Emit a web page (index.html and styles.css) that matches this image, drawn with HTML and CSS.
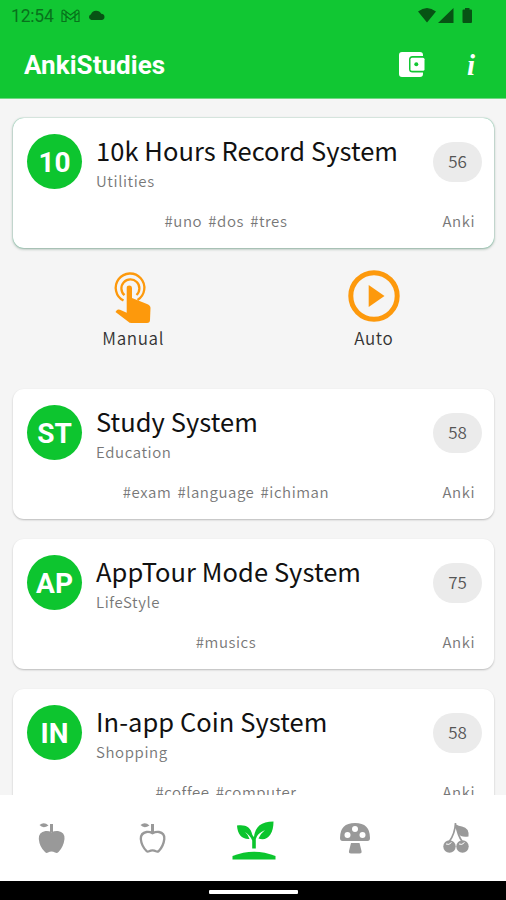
FILE: index.html
```html
<!DOCTYPE html>
<html lang="en">
<head>
<meta charset="utf-8">
<title>AnkiStudies</title>
<link rel="stylesheet" href="styles.css">
</head>
<body>
<div class="app">
  <header class="top">
    <div class="status">
      <span class="clock">12:54</span>
      <svg class="mail" width="19" height="14" viewBox="0 0 19 14" fill="none" stroke="currentColor" stroke-width="1.200"><path d="M1 12.5V3Q1 1 3 1L9.5 6 16 1Q18 1 18 3V12.5H14V7L9.5 10.5 5 7V12.5ZM1.500 4L9.500 10.500 17.500 4M5 3V7M14 3V7"/></svg>
      <svg class="cloud" width="17" height="10" viewBox="0 0 17 10"><path fill="currentColor" d="M3.500 10A3 3 0 0 1 3 4.200 5.500 5 0 0 1 13.200 3.700 3.300 3.200 0 0 1 14 10Z"/></svg>
      <div class="signals">
        <svg width="55" height="17" viewBox="0 0 55 17" fill="currentColor"><path d="M0 4.500Q9 -2.500 18 4.500L9 15.500ZM20 16L35.500 1V16ZM44.500 3.500Q44.500 2.500 45.500 2.500H47V1H51.500V2.500H53Q54 2.500 54 3.500V15Q54 16 53 16H45.500Q44.500 16 44.500 15Z"/></svg>
      </div>
    </div>
    <div class="bar">
      <h1>AnkiStudies</h1>
      <svg class="wallet" width="26" height="25" viewBox="0 0 26 25"><path fill="#fff" d="M3 0H21Q24 0 24 3V4H13.500Q10 4 10 7.500V17Q10 20.500 13.500 20.500H24V22Q24 25 21 25H3Q0 25 0 22V3Q0 0 3 0Z"/><rect x="11.500" y="5.700" width="14" height="13" rx="1.500" fill="#fff"/><circle cx="17.300" cy="12.300" r="2" fill="#11c733"/></svg>
      <span class="info">i</span>
    </div>
  </header>

  <main class="list">
    <article class="card selected">
      <div class="head"><div class="avatar">10</div><div class="names"><h2>10k Hours Record System</h2><p>Utilities</p></div><span class="count">56</span></div>
      <div class="foot"><span class="tags">#uno&nbsp; #dos&nbsp; #tres</span><span class="owner">Anki</span></div>
    </article>
    <div class="modes">
      <div class="mode">
        <svg class="touch" width="52" height="52" viewBox="0 0 52 52"><g fill="none" stroke="#fd990c" stroke-width="2.300"><path d="M11.500 29.500A14.300 14.300 0 1 1 25.500 29"/><path d="M12.500 24.200A9 9 0 1 1 24.500 24"/></g><path fill="#fd990c" d="M14.700 17Q14.700 14.600 17.300 14.600T20 17V27L35 33Q38.500 34.500 38.500 37L38 49Q38 52 35 52H19.500Q17.500 52 16 50.500L3.500 41 5 39Q6 38 8 38.700L14.700 41.800Z"/></svg>
        <span>Manual</span>
      </div>
      <div class="mode">
        <svg width="52" height="52" viewBox="0 0 52 52"><circle cx="26" cy="26" r="23.200" fill="none" stroke="#fd990c" stroke-width="5"/><path fill="#fd990c" d="M20.700 15L36.500 26 20.700 37Z"/></svg>
        <span>Auto</span>
      </div>
    </div>
    <article class="card">
      <div class="head"><div class="avatar">ST</div><div class="names"><h2>Study System</h2><p>Education</p></div><span class="count">58</span></div>
      <div class="foot"><span class="tags">#exam&nbsp; #language&nbsp; #ichiman</span><span class="owner">Anki</span></div>
    </article>
    <article class="card">
      <div class="head"><div class="avatar">AP</div><div class="names"><h2>AppTour Mode System</h2><p>LifeStyle</p></div><span class="count">75</span></div>
      <div class="foot"><span class="tags">#musics</span><span class="owner">Anki</span></div>
    </article>
    <article class="card">
      <div class="head"><div class="avatar">IN</div><div class="names"><h2>In-app Coin System</h2><p>Shopping</p></div><span class="count">58</span></div>
      <div class="foot"><span class="tags">#coffee&nbsp; #computer</span><span class="owner">Anki</span></div>
    </article>
  </main>

  <nav class="tabs">
    <div class="tab"><svg width="28" height="32" viewBox="0 0 28 32"><g fill="#999"><path d="M1.500 3Q6-.5 10.500 3.500 5 7 1.500 3Z"/><path d="M12 2H15V10H12Z"/><path d="M7.500 9Q10.500 8.500 13.500 10.200 17 8.500 20 9 27 10 26.500 17 25.500 25 20.500 30 19 31.500 17 30.500 13.500 28.500 10 30.500 8.500 31.500 7 30 1.500 25 .8 17 .5 10 7.500 9Z"/></g></svg></div>
    <div class="tab"><svg width="28" height="32" viewBox="0 0 28 32"><g fill="#999"><path d="M1.500 3Q6-.5 10.500 3.500 5 7 1.500 3Z"/><path d="M12 2H15V10H12Z"/></g><path fill="none" stroke="#999" stroke-width="2.300" d="M7.500 10Q10.500 9.500 13.500 11.200 17 9.500 20 10 25.700 11 25.300 17 24.500 24 19.800 29 18.500 30 17 29.300 13.500 27.300 10 29.300 8.500 30 7.500 29 2.500 24 1.800 17 1.700 11 7.500 10Z"/></svg></div>
    <div class="tab"><svg class="sprout" width="44" height="40" viewBox="0 0 44 40"><g fill="#0bc52d"><path d="M.5 39.500V36Q22 27.500 43.500 36V39.500Z"/><path d="M5 5.500C13 4 19 7 20.200 14.500Q21 16 22 17C23.500 6 29 2 41.500 1.500 41.500 15 35 21.500 26.500 18.500Q29 13 33 10 25 13.500 23.800 19V28.500H20.200V20.500Q18 15 13 12 16.500 15 17.500 19C10 19.500 5.500 14.500 5 5.500Z"/></g></svg></div>
    <div class="tab"><svg width="32" height="32" viewBox="0 0 32 32"><path fill="#999" d="M1 16Q1 1 16 1T31 16Q31 19 28.500 19H3.500Q1 19 1 16ZM12 21H20.500L22.500 29Q23 31.500 20.500 31.500H12Q9.500 31.500 10 29Z"/><g fill="#fff"><circle cx="8.500" cy="13" r="3"/><circle cx="16" cy="7" r="3"/><circle cx="23.500" cy="13" r="3"/></g></svg></div>
    <div class="tab"><svg width="28" height="32" viewBox="0 0 28 32"><g fill="#999"><circle cx="7.500" cy="24.500" r="6.200"/><circle cx="20.500" cy="24.500" r="6.200"/><path d="M13 2Q17 4 20 4.500 27.500 6 26.500 14.500 19 16 16 11Z"/></g><path d="M13.500 1Q13 12 7 20M14 3Q16 14 20 19" fill="none" stroke="#999" stroke-width="1.700"/><path d="M4 22Q7 23.500 9.500 20.500M17 22Q20 23.500 22.500 20.500" fill="none" stroke="#fff"/></svg></div>
  </nav>
  <footer class="gesture"><span></span></footer>
</div>
</body>
</html>
```
FILE: styles.css
```css
* { box-sizing: border-box; }
body { margin: 0; background: #f5f5f5; font-family: "Noto Sans CJK JP", "Noto Sans", sans-serif; }
h1, h2, p { margin: 0; }
svg { display: block; flex: none; }
.app { display: flex; flex-direction: column; width: 506px; height: 900px; overflow: hidden; }

.top { flex: none; height: 99px; background: #11c733; border-bottom: 1px solid #70d982; }
.status { display: flex; align-items: center; height: 32px; padding: 0 33px 0 11px; color: #08721c; }
.clock { width: 43px; font: 17.500px/32px Roboto, sans-serif; letter-spacing: -.2px; }
.mail { margin-left: 7px; }
.cloud { margin: -2px 0 0 8px; color: #075314; }
.signals { margin: -1px 0 0 auto; color: #075314; }
.bar { display: flex; align-items: center; height: 66px; padding: 0 26px 0 24px; color: #fff; }
.bar h1 { flex: 1; font: 700 26px/32px Roboto, sans-serif; letter-spacing: .05px; }
.wallet { margin-top: -1px; }
.info { width: 18px; margin-left: 37px; font: italic 700 29px/32px "Liberation Serif", serif; text-align: center; }

.list { flex: 1; min-height: 0; overflow: hidden; display: flex; flex-direction: column; gap: 20px; padding: 19px 12px 0 13px; }
.card { flex: none; height: 130px; border-radius: 11px; background: #fff; box-shadow: 0 1px 2px rgba(0, 0, 0, .24); }
.selected { box-shadow: 0 0 1px #39ad7c, 0 1px 3px rgba(0, 60, 30, .4); }
.head { display: flex; height: 87px; padding: 16px 12px 0 14px; }
.avatar { flex: none; width: 55px; height: 55px; border-radius: 50%; background: #0dc52f; color: #fff; font: 700 28px/57px Roboto, sans-serif; text-align: center; }
.names { flex: 1; margin: -2px 0 0 14px; white-space: nowrap; }
.names h2 { height: 38px; color: #111; font-size: 25.500px; line-height: 36px; font-weight: 400; letter-spacing: .05px; }
.names p { height: 22px; color: #777; font-size: 15px; line-height: 22px; font-weight: 350; letter-spacing: .6px; }
.count { width: 49px; height: 40px; margin-top: 8px; border-radius: 20px; background: #ebebeb; color: #555; font-size: 17px; line-height: 38px; font-weight: 350; text-align: center; }
.foot { display: flex; height: 30px; padding: 0 19px 0 25px; color: #777; font-size: 15px; line-height: 31px; font-weight: 350; letter-spacing: .55px; }
.tags { flex: 1; padding-right: 27px; text-align: center; word-spacing: -.8px; }
.owner { width: 34px; text-align: right; white-space: nowrap; }
.modes { flex: none; display: flex; height: 101px; padding-top: 2px; }
.mode { flex: 1; display: flex; flex-direction: column; align-items: center; color: #333; font-size: 17px; line-height: 32px; letter-spacing: .65px; font-weight: 350; }
.touch { margin: 1px 0 -1px 10px; }
.tabs { flex: none; display: flex; height: 86px; padding-left: 2px; background: #fff; }
.tab { flex: 1; display: flex; align-items: center; justify-content: center; }
.sprout { margin-top: 4px; }
.gesture { flex: none; display: flex; justify-content: center; height: 19px; padding-top: 9px; background: #000; }
.gesture span { width: 89px; height: 4px; border-radius: 1px; background: #fff; }
```
